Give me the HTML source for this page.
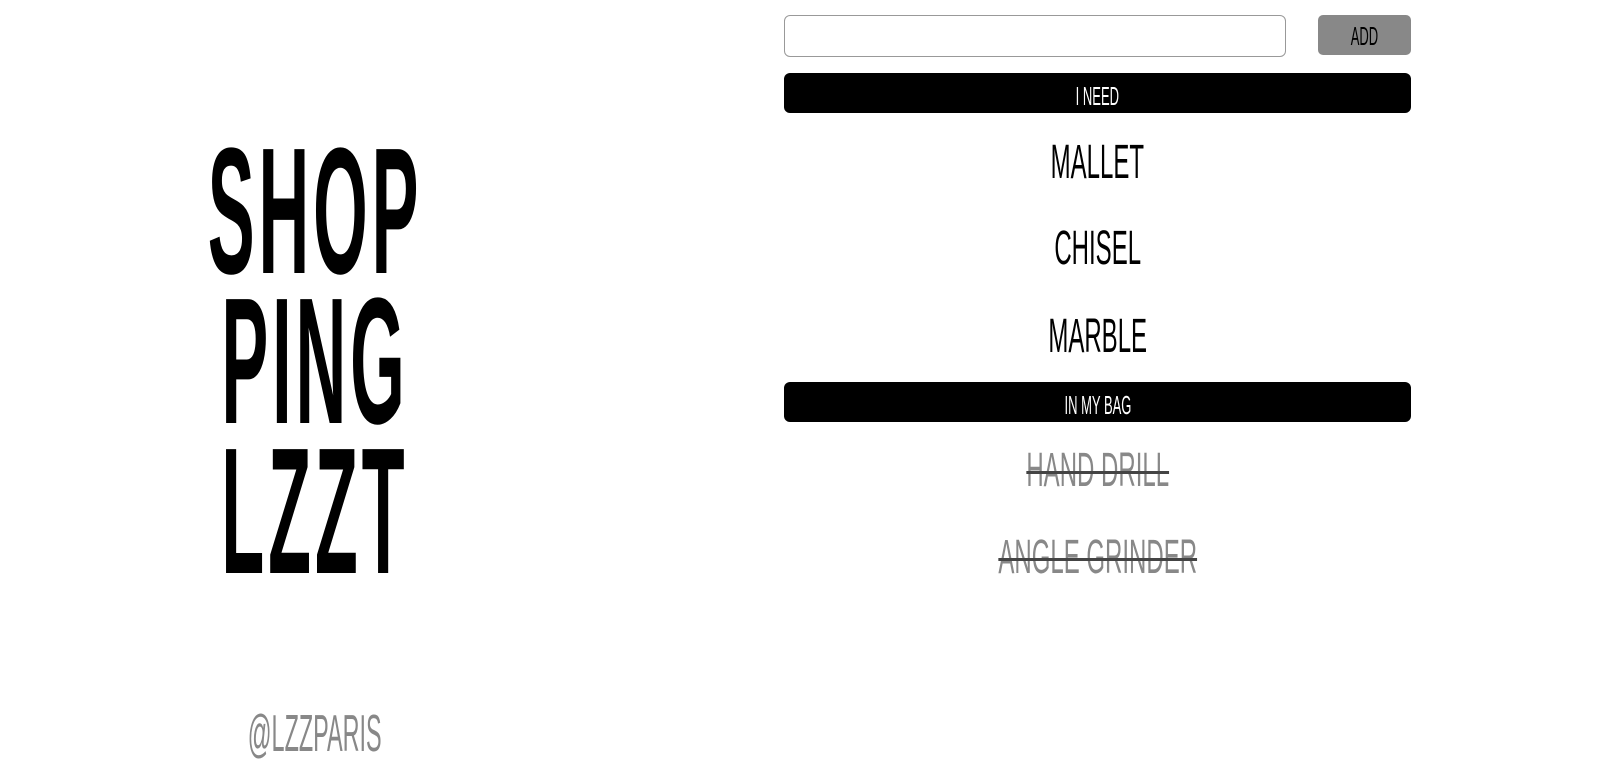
<!DOCTYPE html>
<html><head><meta charset="utf-8"><style>
body{margin:0;width:1598px;height:781px;background:#fff;position:relative;overflow:hidden;font-family:"Liberation Sans",sans-serif;}
.t{position:absolute;left:0;width:100%;text-align:center;white-space:nowrap;}
.t span{display:inline-block;transform:scaleX(.5);transform-origin:center;}
.box{position:absolute;}
.s span{text-decoration:line-through;text-decoration-color:#444;text-decoration-thickness:3px;}
</style></head><body>
<div class="box" style="left:-185px;width:1000px;top:0;height:781px">
<div class="t" style="top:122px;font-size:180px;line-height:180px;font-weight:bold"><span style="transform:scaleX(.39);letter-spacing:10px">SHOP</span></div>
<div class="t" style="top:272px;font-size:180px;line-height:180px;font-weight:bold"><span style="transform:scaleX(.39);letter-spacing:10px">PING</span></div>
<div class="t" style="top:422px;font-size:180px;line-height:180px;font-weight:bold"><span style="transform:scaleX(.39);letter-spacing:10px">LZZT</span></div>
<div class="t" style="top:706px;font-size:52px;line-height:56px;color:#888;"><span style="transform:scaleX(.45)">@LZZPARIS</span></div>
</div>
<div class="box" style="left:784px;top:15px;width:500px;height:40px;border:1px solid #999;border-radius:6px"></div>
<div class="box" style="left:1318px;top:15px;width:93px;height:40px;background:#888;border-radius:5px"><div class="t" style="top:6px;font-size:26px;line-height:30px"><span>ADD</span></div></div>
<div class="box" style="left:784px;top:73px;width:627px;height:40px;background:#000;border-radius:6px"><div class="t" style="top:8px;color:#fff;font-size:26px;line-height:30px"><span>I NEED</span></div></div>
<div class="box" style="left:784px;top:382px;width:627px;height:40px;background:#000;border-radius:6px"><div class="t" style="top:8px;color:#fff;font-size:26px;line-height:30px"><span>IN MY BAG</span></div></div>
<div class="box" style="left:784px;width:627px;top:0;height:781px">
<div class="t" style="top:137px;font-size:48px;line-height:52px"><span>MALLET</span></div>
<div class="t" style="top:223px;font-size:48px;line-height:52px"><span>CHISEL</span></div>
<div class="t" style="top:311px;font-size:48px;line-height:52px"><span>MARBLE</span></div>
<div class="t s" style="top:445px;font-size:48px;line-height:52px;color:#888;"><span>HAND DRILL</span></div>
<div class="t s" style="top:532px;font-size:48px;line-height:52px;color:#888;"><span>ANGLE GRINDER</span></div>
</div>
</body></html>
